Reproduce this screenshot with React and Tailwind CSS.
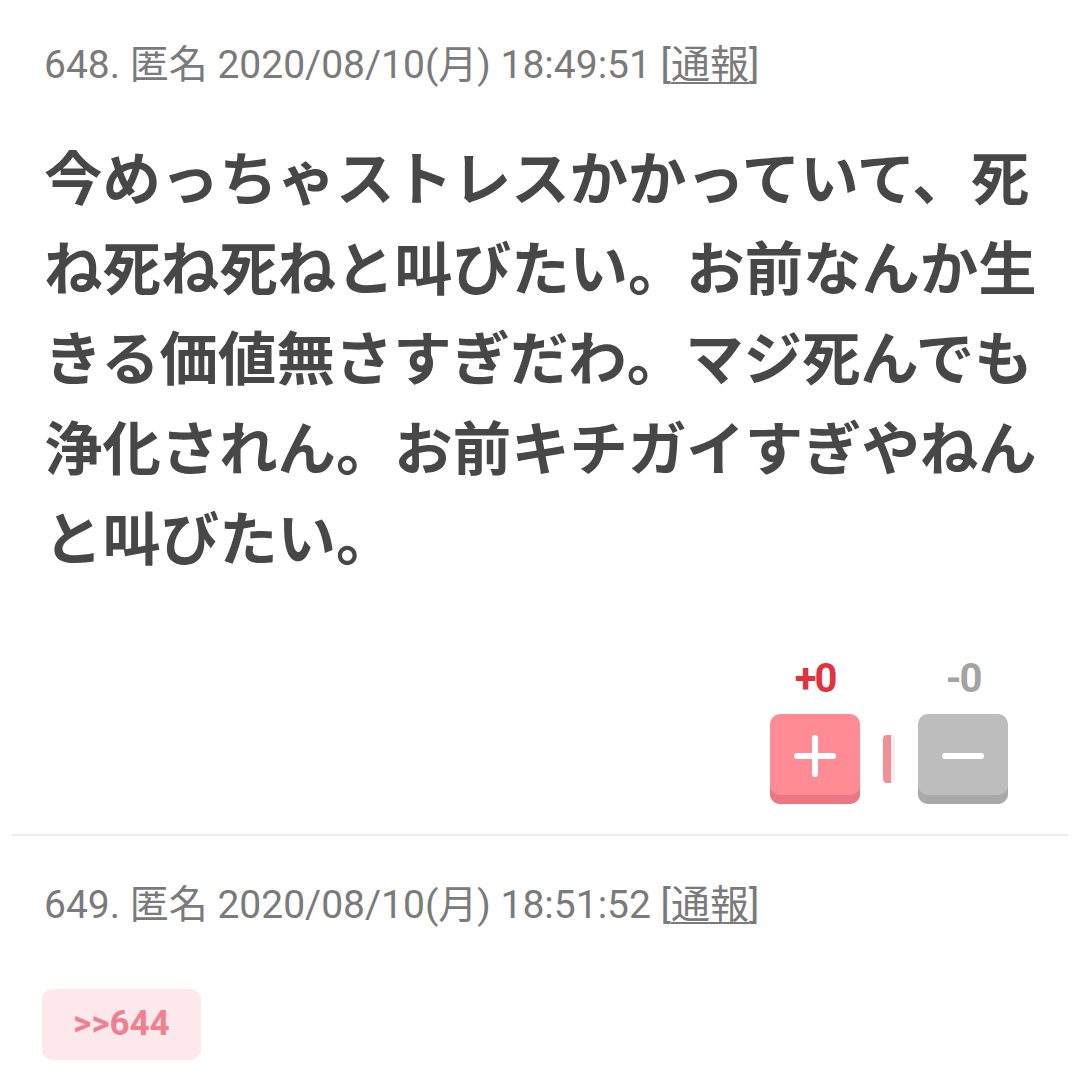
import React from 'react';

const jp = { fontFamily: 'Roboto, "Noto Sans CJK JP", sans-serif' };

function Meta({ no, time }) {
  return (
    <div className="text-[39px] leading-[46px] text-[#7a7a7a] whitespace-nowrap" style={jp}>
      {no}. 匿名 2020/08/10(月) {time} [<span className="underline underline-offset-4 decoration-2">通報</span>]
    </div>
  );
}

export default function App() {
  return (
    <div className="w-[1080px] h-[1065px] bg-white overflow-hidden" style={jp}>
      <div className="pl-[44px] pr-[30px] pt-[42px]">
        <Meta no="648" time="18:49:51" />
        <p className="mt-[47px] text-[58.4px] leading-[90px] font-bold text-[#474747]">
          今めっちゃストレスかかっていて、死ね死ね死ねと叫びたい。お前なんか生きる価値無さすぎだわ。マジ死んでも浄化されん。お前キチガイすぎやねんと叫びたい。
        </p>
        <div className="flex justify-end mt-[74px] pr-[42px]">
          <div className="flex items-end gap-[23px]">
            <div className="flex flex-col items-center w-[90px]">
              <span className="text-[40px] leading-[40px] font-bold tracking-[-2px] text-[#e0323f]">+0</span>
              <button className="mt-[15px] w-[90px] h-[90px] rounded-[10px] bg-[#ff8c95] shadow-[inset_0_-9px_0_#ea7782] flex items-center justify-center pb-[6px]">
                <svg width="44" height="44" viewBox="0 0 44 44">
                  <path d="M22 4v36M4 22h36" stroke="white" strokeWidth="6" strokeLinecap="round" />
                </svg>
              </button>
            </div>
            <div className="mb-[21px] w-[12px] h-[48px] rounded-[4px] bg-[#f28e98] border-r-[4px] border-[#f0f0f0]" />
            <div className="flex flex-col items-center w-[90px]">
              <span className="text-[40px] leading-[40px] font-bold tracking-[-2px] text-[#a3a3a3]">-0</span>
              <button className="mt-[15px] w-[90px] h-[90px] rounded-[10px] bg-[#bdbdbd] shadow-[inset_0_-9px_0_#a9a9a9] flex items-center justify-center pb-[6px]">
                <svg width="44" height="44" viewBox="0 0 44 44">
                  <path d="M4 22h36" stroke="white" strokeWidth="6" strokeLinecap="round" />
                </svg>
              </button>
            </div>
          </div>
        </div>
      </div>
      <div className="mx-[12px] mt-[30px] h-[2px] bg-[#eeeeee]" />
      <div className="px-[44px] pt-[46px]">
        <Meta no="649" time="18:51:52" />
        <div className="mt-[61px] -ml-[2px] inline-flex items-center justify-center w-[159px] h-[71px] rounded-[10px] bg-[#fde9ec]">
          <span className="text-[35px] font-bold text-[#f0808f]">&gt;&gt;644</span>
        </div>
      </div>
    </div>
  );
}
